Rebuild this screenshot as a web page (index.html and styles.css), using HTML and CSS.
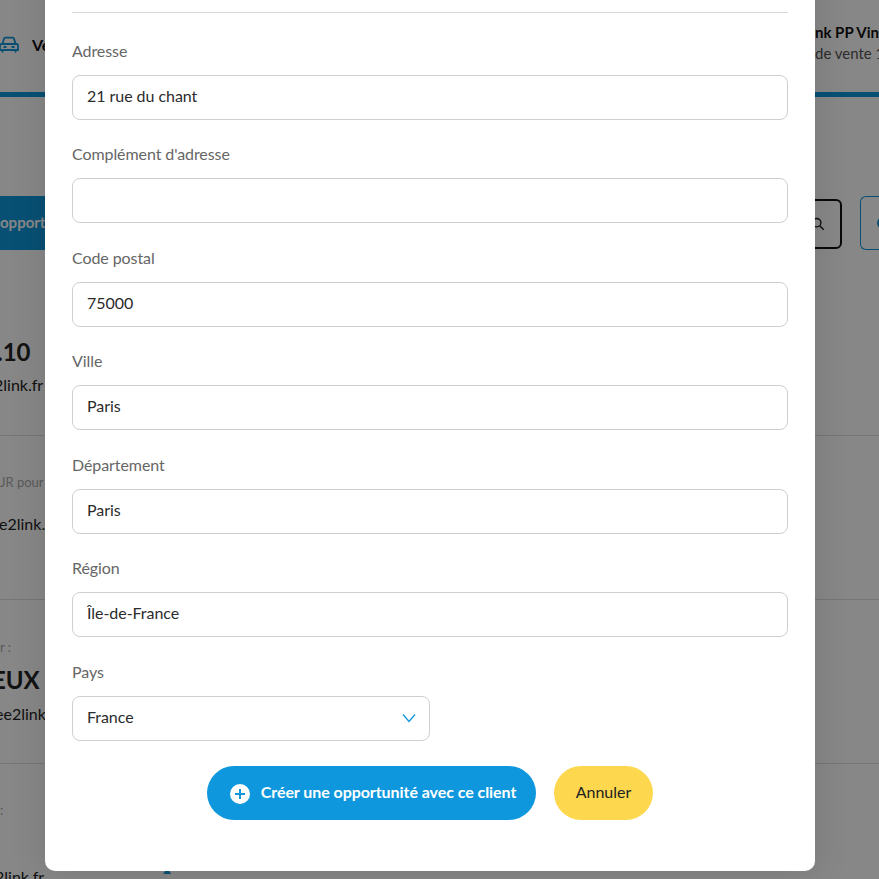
FILE: index.html
```html
<!DOCTYPE html>
<html lang="fr">
<head>
<meta charset="utf-8">
<title>Créer une opportunité</title>
<link rel="stylesheet" href="styles.css">
</head>
<body>
<div class="page">
  <header class="topbar">
    <div class="vehicle">
      <svg class="car" viewBox="0 0 20 18" width="20" height="18" aria-hidden="true"><path d="M3.500 8l1.300-4.800A2 2 0 0 1 6.700 1.700h6.600a2 2 0 0 1 1.900 1.500L16.500 8M2.500 8h15a1.500 1.500 0 0 1 1.500 1.500V14H1V9.500A1.500 1.500 0 0 1 2.500 8zM3.500 14v2.500M16.500 14v2.500M4.500 11h3M12.500 11h3" fill="none" stroke="currentColor" stroke-width="1.800"/></svg>
      <strong>Ve</strong>
    </div>
    <div class="pp"><strong>nk PP Vin</strong><span>de vente 1</span></div>
  </header>
  <div class="tools">
    <div class="tab">opport</div>
    <div class="tool-right">
      <div class="search"><svg viewBox="0 0 16 16" width="14" height="14" aria-hidden="true"><circle cx="6.500" cy="6.500" r="4.800" fill="none" stroke="currentColor" stroke-width="1.500"/><path d="M10 10l4.500 4.500" stroke="currentColor" stroke-width="1.500"/></svg></div>
      <div class="outline"><span class="dot"></span></div>
    </div>
  </div>
  <section class="row r1"><b>.10</b><span>2link.fr</span></section>
  <section class="row r2"><small>JR pour</small><span>e2link.</span></section>
  <section class="row r3"><small>r :</small><b>EUX</b><span>ee2link</span></section>
  <section class="row r4"><small>:</small><div class="last"><span>2link.fr</span><i class="tip"></i></div></section>
</div>
<div class="overlay"></div>
<main class="modal">
  <div class="rule"></div>
  <form class="form">
    <label class="field"><span class="label">Adresse</span><span class="input">21 rue du chant</span></label>
    <label class="field"><span class="label">Complément d'adresse</span><span class="input"></span></label>
    <label class="field"><span class="label">Code postal</span><span class="input">75000</span></label>
    <label class="field"><span class="label">Ville</span><span class="input">Paris</span></label>
    <label class="field"><span class="label">Département</span><span class="input">Paris</span></label>
    <label class="field"><span class="label">Région</span><span class="input">Île-de-France</span></label>
    <label class="field"><span class="label">Pays</span><span class="input select">France<svg viewBox="0 0 14 10" width="14" height="10" aria-hidden="true"><path d="M1 1.500l6 7 6-7" fill="none" stroke="#0e97dc" stroke-width="1.300"/></svg></span></label>
  </form>
  <div class="actions">
    <button class="btn primary" type="button"><svg viewBox="0 0 20 20" width="20" height="20" aria-hidden="true"><circle cx="10" cy="10" r="10" fill="#fff"/><path d="M10 5v10M5 10h10" stroke="#0e97dc" stroke-width="2"/></svg><span>Créer une opportunité avec ce client</span></button>
    <button class="btn cancel" type="button">Annuler</button>
  </div>
</main>
</body>
</html>
```
FILE: styles.css
```css
* { box-sizing: border-box; }
html, body { margin: 0; height: 100%; }
body { width: 879px; height: 879px; overflow: hidden; position: relative; font-family: Lato, "Liberation Sans", sans-serif; color: #222; background: #fff; }
.page { height: 879px; overflow: hidden; }
.topbar { height: 97px; border-bottom: 5px solid #0e97dc; display: flex; justify-content: space-between; padding-top: 33px; }
.vehicle { display: flex; gap: 13px; align-items: flex-start; color: #0e97dc; font-size: 16px; }
.vehicle strong { color: #111; line-height: 24px; }
.car { margin-top: 3px; margin-left: -1px; }
.pp { width: 64px; display: flex; flex-direction: column; white-space: nowrap; font-size: 15px; line-height: 21px; margin-top: -11px; }
.pp strong { color: #111; }
.pp span { color: #555; }
.tools { height: 153px; padding-top: 99px; display: flex; justify-content: space-between; }
.tab { width: 60px; height: 54px; background: #0e97dc; color: #fff; font-weight: 700; font-size: 15px; line-height: 52px; border-radius: 0 4px 4px 0; }
.tool-right { display: flex; gap: 18px; }
.search { width: 60px; height: 50px; margin-top: 3px; border: 2px solid #111; border-radius: 6px; display: flex; align-items: center; justify-content: flex-end; padding-right: 15px; color: #111; }
.outline { width: 19px; height: 54px; border: 1px solid #0e97dc; border-right: 0; border-radius: 6px 0 0 6px; display: flex; align-items: center; overflow: hidden; padding-left: 16px; }
.dot { flex: none; width: 12px; height: 12px; border-radius: 50%; background: #0e97dc; }
.row { display: flex; flex-direction: column; border-bottom: 1px solid #ddd; white-space: nowrap; }
.row b { font-size: 24px; line-height: 30px; }
.row span { font-size: 16px; line-height: 22px; }
.row small { font-size: 13px; line-height: 18px; color: #aaa; }
.r1 { height: 186px; padding-top: 87px; }
.r1 b { margin-left: -3px; }
.r1 span { margin-top: 7px; margin-left: -6px; }
.r2 { height: 164px; padding-top: 37px; }
.r2 span { margin-top: 22px; margin-left: -1px; }
.r3 { height: 164px; padding-top: 38px; }
.r3 b { margin-top: 9px; margin-left: -8px; }
.r3 span { margin-top: 8px; margin-left: -5px; }
.r4 { padding-top: 37px; border-bottom: 0; }
.last { display: flex; margin-top: 47px; margin-left: -5px; gap: 119px; }
.tip { width: 8px; height: 6px; margin-top: 2px; background: #0e97dc; clip-path: polygon(50% 0, 100% 100%, 0 100%); }
.overlay { position: absolute; inset: 0; background: rgba(0, 0, 0, .47); }
.modal { position: absolute; left: 45px; top: -40px; width: 770px; height: 911px; background: #fff; border-radius: 0 0 10px 10px; padding: 52px 27px 0; box-shadow: 0 0 36px rgba(0, 0, 0, .12); }
.rule { height: 1px; background: #d8d8d8; }
.form { display: flex; flex-direction: column; gap: 24.5px; padding-top: 27.8px; }
.field { display: flex; flex-direction: column; gap: 14px; }
.label { font-size: 16px; line-height: 20px; color: #666; letter-spacing: -.08px; }
.input { height: 45px; border: 1px solid #cfcfcf; border-radius: 8px; padding: 0 14px; font-size: 16px; line-height: 40px; color: #2b2b2b; background: #fff; letter-spacing: -.05px; }
.select { width: 358px; display: flex; justify-content: space-between; align-items: center; padding-right: 13px; padding-bottom: 3px; }
.select svg { position: relative; top: 1px; }
.actions { display: flex; justify-content: center; gap: 18px; margin-top: 25px; }
.btn { height: 54px; border: 0; border-radius: 27px; font-family: inherit; font-size: 16px; padding: 0 0 3px; }
.primary { width: 329px; background: #0e97dc; color: #fff; font-weight: 700; display: flex; align-items: center; justify-content: center; gap: 11px; letter-spacing: -.06px; padding-left: 3px; }
.primary svg { position: relative; top: 3px; }
.cancel { width: 99px; background: #fdd84f; color: #222; }
```
